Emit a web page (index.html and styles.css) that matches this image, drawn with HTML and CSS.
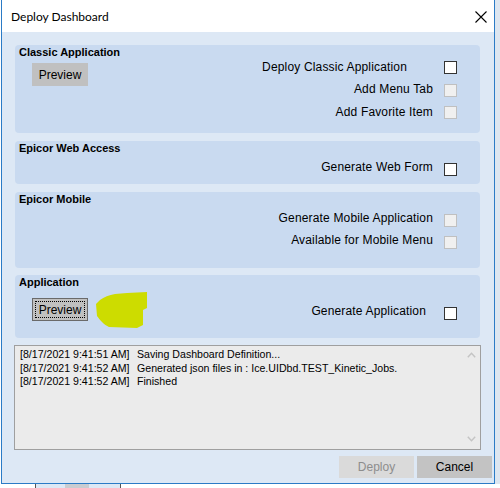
FILE: index.html
```html
<!DOCTYPE html>
<html>
<head>
<meta charset="utf-8">
<title>Deploy Dashboard</title>
<link rel="stylesheet" href="styles.css">
</head>
<body>
<div class="screen">
  <div class="top">
    <div class="window">
      <div class="titlebar">
        <span class="title-text">Deploy Dashboard</span>
        <svg class="close" width="12" height="12" viewBox="0 0 12 12"><path d="M0.5 0.5 L11.5 11.5 M11.5 0.5 L0.5 11.5" stroke="#000" stroke-width="1.1" fill="none"/></svg>
      </div>
      <div class="content">
        <section class="panel p1">
          <div class="ptitle">Classic Application</div>
          <div class="pbody">
            <div class="left l1"><div class="btn preview">Preview</div></div>
            <div class="rows r1">
              <div class="row"><span class="label up1 lw">Deploy Classic Application</span><span class="cb"></span></div>
              <div class="row"><span class="label up1">Add Menu Tab</span><span class="cb dis"></span></div>
              <div class="row"><span class="label up1">Add Favorite Item</span><span class="cb dis"></span></div>
            </div>
          </div>
        </section>
        <section class="panel p2">
          <div class="ptitle">Epicor Web Access</div>
          <div class="pbody">
            <div class="rows r2">
              <div class="row"><span class="label up3">Generate Web Form</span><span class="cb"></span></div>
            </div>
          </div>
        </section>
        <section class="panel p3">
          <div class="ptitle">Epicor Mobile</div>
          <div class="pbody">
            <div class="rows r3">
              <div class="row"><span class="label up3">Generate Mobile Application</span><span class="cb dis"></span></div>
              <div class="row"><span class="label up3">Available for Mobile Menu</span><span class="cb dis"></span></div>
            </div>
          </div>
        </section>
        <section class="panel p4">
          <div class="ptitle">Application</div>
          <div class="pbody">
            <div class="left l4"><div class="btn preview focused"><span class="focus">Preview</span></div></div>
            <div class="rows r4">
              <div class="row"><span class="label up3 lg">Generate Application</span><span class="cb"></span></div>
            </div>
          </div>
          <svg class="blob" width="56" height="40" viewBox="0 0 56 40"><path d="M5 8 C9 5 14 3 20 2 L32 1 L52 0 L52 16 L48 18 L48 33 L42 36 L14 35 C9 33 5 28 2 24 L1 12 Z" fill="#cddc00"/></svg>
        </section>
        <div class="log">
          <div class="lines">
            <div class="line"><span class="ts">[8/17/2021 9:41:51 AM]</span><span>Saving Dashboard Definition...</span></div>
            <div class="line"><span class="ts">[8/17/2021 9:41:52 AM]</span><span>Generated json files in : Ice.UIDbd.TEST_Kinetic_Jobs.</span></div>
            <div class="line"><span class="ts">[8/17/2021 9:41:52 AM]</span><span>Finished</span></div>
          </div>
          <div class="scroll">
            <svg width="9" height="6" viewBox="0 0 9 6"><path d="M0.8 5.2 L4.5 1.2 L8.2 5.2" stroke="#c4c4c4" stroke-width="1.4" fill="none"/></svg>
            <svg width="9" height="6" viewBox="0 0 9 6"><path d="M0.8 0.8 L4.5 4.8 L8.2 0.8" stroke="#c4c4c4" stroke-width="1.4" fill="none"/></svg>
          </div>
        </div>
        <div class="footer">
          <div class="btn fbtn disabled">Deploy</div>
          <div class="btn fbtn">Cancel</div>
        </div>
      </div>
    </div>
    <div class="rightfill"></div>
  </div>
  <div class="bottom-strip">
    <div class="taskbox"><div class="taskinner"></div></div>
  </div>
</div>
</body>
</html>
```
FILE: styles.css
```css
html, body {
  margin: 0;
  padding: 0;
}
body {
  width: 500px;
  height: 488px;
  overflow: hidden;
  background: #ffffff;
  font-family: "Liberation Sans", Arial, sans-serif;
  color: #000;
}
.screen {
  display: flex;
  flex-direction: column;
}
.top {
  display: flex;
  height: 484px;
}
.window {
  margin-left: 1px;
  width: 492px;
  border: 1px solid #2b7bc6;
  border-top: 0;
  display: flex;
  flex-direction: column;
}
.rightfill {
  flex: 1;
  background: #dde6f0;
}
.titlebar {
  height: 32px;
  background: #ffffff;
  display: flex;
  align-items: flex-start;
  padding-left: 9px;
}
.title-text {
  font-family: Lato, "Noto Sans", sans-serif;
  font-size: 12px;
  line-height: 16px;
  margin-top: 9px;
}
.close {
  margin-left: auto;
  margin-right: 7px;
  margin-top: 11px;
}
.content {
  flex: 1;
  background: #dde8f5;
  display: flex;
  flex-direction: column;
  padding-top: 13px;
}
.panel {
  position: relative;
  background: #c9daf0;
  border-radius: 4px;
  margin: 0 14px 0 13px;
  padding: 1px 23px 0 4px;
  box-sizing: border-box;
}
.p1 { height: 88px; }
.p2 { height: 43px; margin-top: 8px; }
.p3 { height: 76px; margin-top: 8px; }
.p4 { height: 63px; margin-top: 7px; }
.ptitle {
  font-weight: bold;
  font-size: 11px;
  line-height: 13px;
  height: 13px;
}
.pbody {
  display: flex;
  align-items: flex-start;
}
.left {
  padding-left: 13px;
}
.l1 { margin-top: 4px; }
.l4 { margin-top: 9px; }
.rows {
  margin-left: auto;
  display: flex;
  flex-direction: column;
  align-items: flex-end;
}
.r1 { margin-top: 2px; gap: 9.5px; }
.r2 { margin-top: 8px; }
.r3 { margin-top: 8px; gap: 9px; }
.r4 { margin-top: 18px; }
.row {
  display: flex;
  align-items: center;
  height: 13px;
}
.label {
  font-size: 12px;
  line-height: 14px;
  letter-spacing: 0.16px;
  white-space: nowrap;
  margin-right: 11px;
}
.label.up1 { margin-bottom: 2px; }
.label.up3 { margin-bottom: 6px; }
.label.lw { margin-right: 37px; }
.label.lg { margin-right: 18px; }
.cb {
  width: 13px;
  height: 13px;
  box-sizing: border-box;
  background: #ffffff;
  border: 1px solid #333333;
}
.cb.dis {
  background: #f0f0f0;
  border-color: #c0c0c0;
}
.btn {
  font-size: 12px;
  display: flex;
  align-items: center;
  justify-content: center;
  box-sizing: border-box;
}
.preview {
  width: 56px;
  height: 23px;
  background: #c0c0c0;
}
.preview.focused {
  border: 1px solid #6a6a6a;
  padding: 2px;
}
.focus {
  flex: 1;
  align-self: stretch;
  display: flex;
  align-items: center;
  justify-content: center;
  outline: 1px dotted #000;
  outline-offset: -1px;
}
.blob {
  position: absolute;
  left: 80px;
  top: 17px;
}
.log {
  margin: 7px 13px 0 12px;
  height: 105px;
  box-sizing: border-box;
  border: 1px solid #9f9f9f;
  background: #ebebeb;
  display: flex;
}
.lines {
  flex: 1;
  padding: 2px 0 0 5px;
  font-size: 10.6px;
  line-height: 13.5px;
}
.line {
  display: flex;
  white-space: nowrap;
}
.ts {
  width: 117px;
  flex: none;
}
.scroll {
  width: 17px;
  display: flex;
  flex-direction: column;
  align-items: center;
  justify-content: space-between;
  padding: 6px 0 7px;
}
.scroll svg { display: block; }
.footer {
  margin-top: 6px;
  display: flex;
  justify-content: flex-end;
  gap: 3px;
  padding-right: 2px;
}
.fbtn {
  width: 75px;
  height: 22px;
  background: #c3c3c3;
  color: #000;
}
.fbtn.disabled {
  background: #dadada;
  color: #8d8d8d;
}
.bottom-strip {
  height: 4px;
  display: flex;
}
.taskbox {
  margin-left: 35px;
  width: 84px;
  border-left: 1px solid #555;
  border-right: 1px solid #555;
  background: #dde8f5;
  display: flex;
}
.taskinner {
  margin-left: 29px;
  width: 24px;
  background: #c9ccd1;
}
```
